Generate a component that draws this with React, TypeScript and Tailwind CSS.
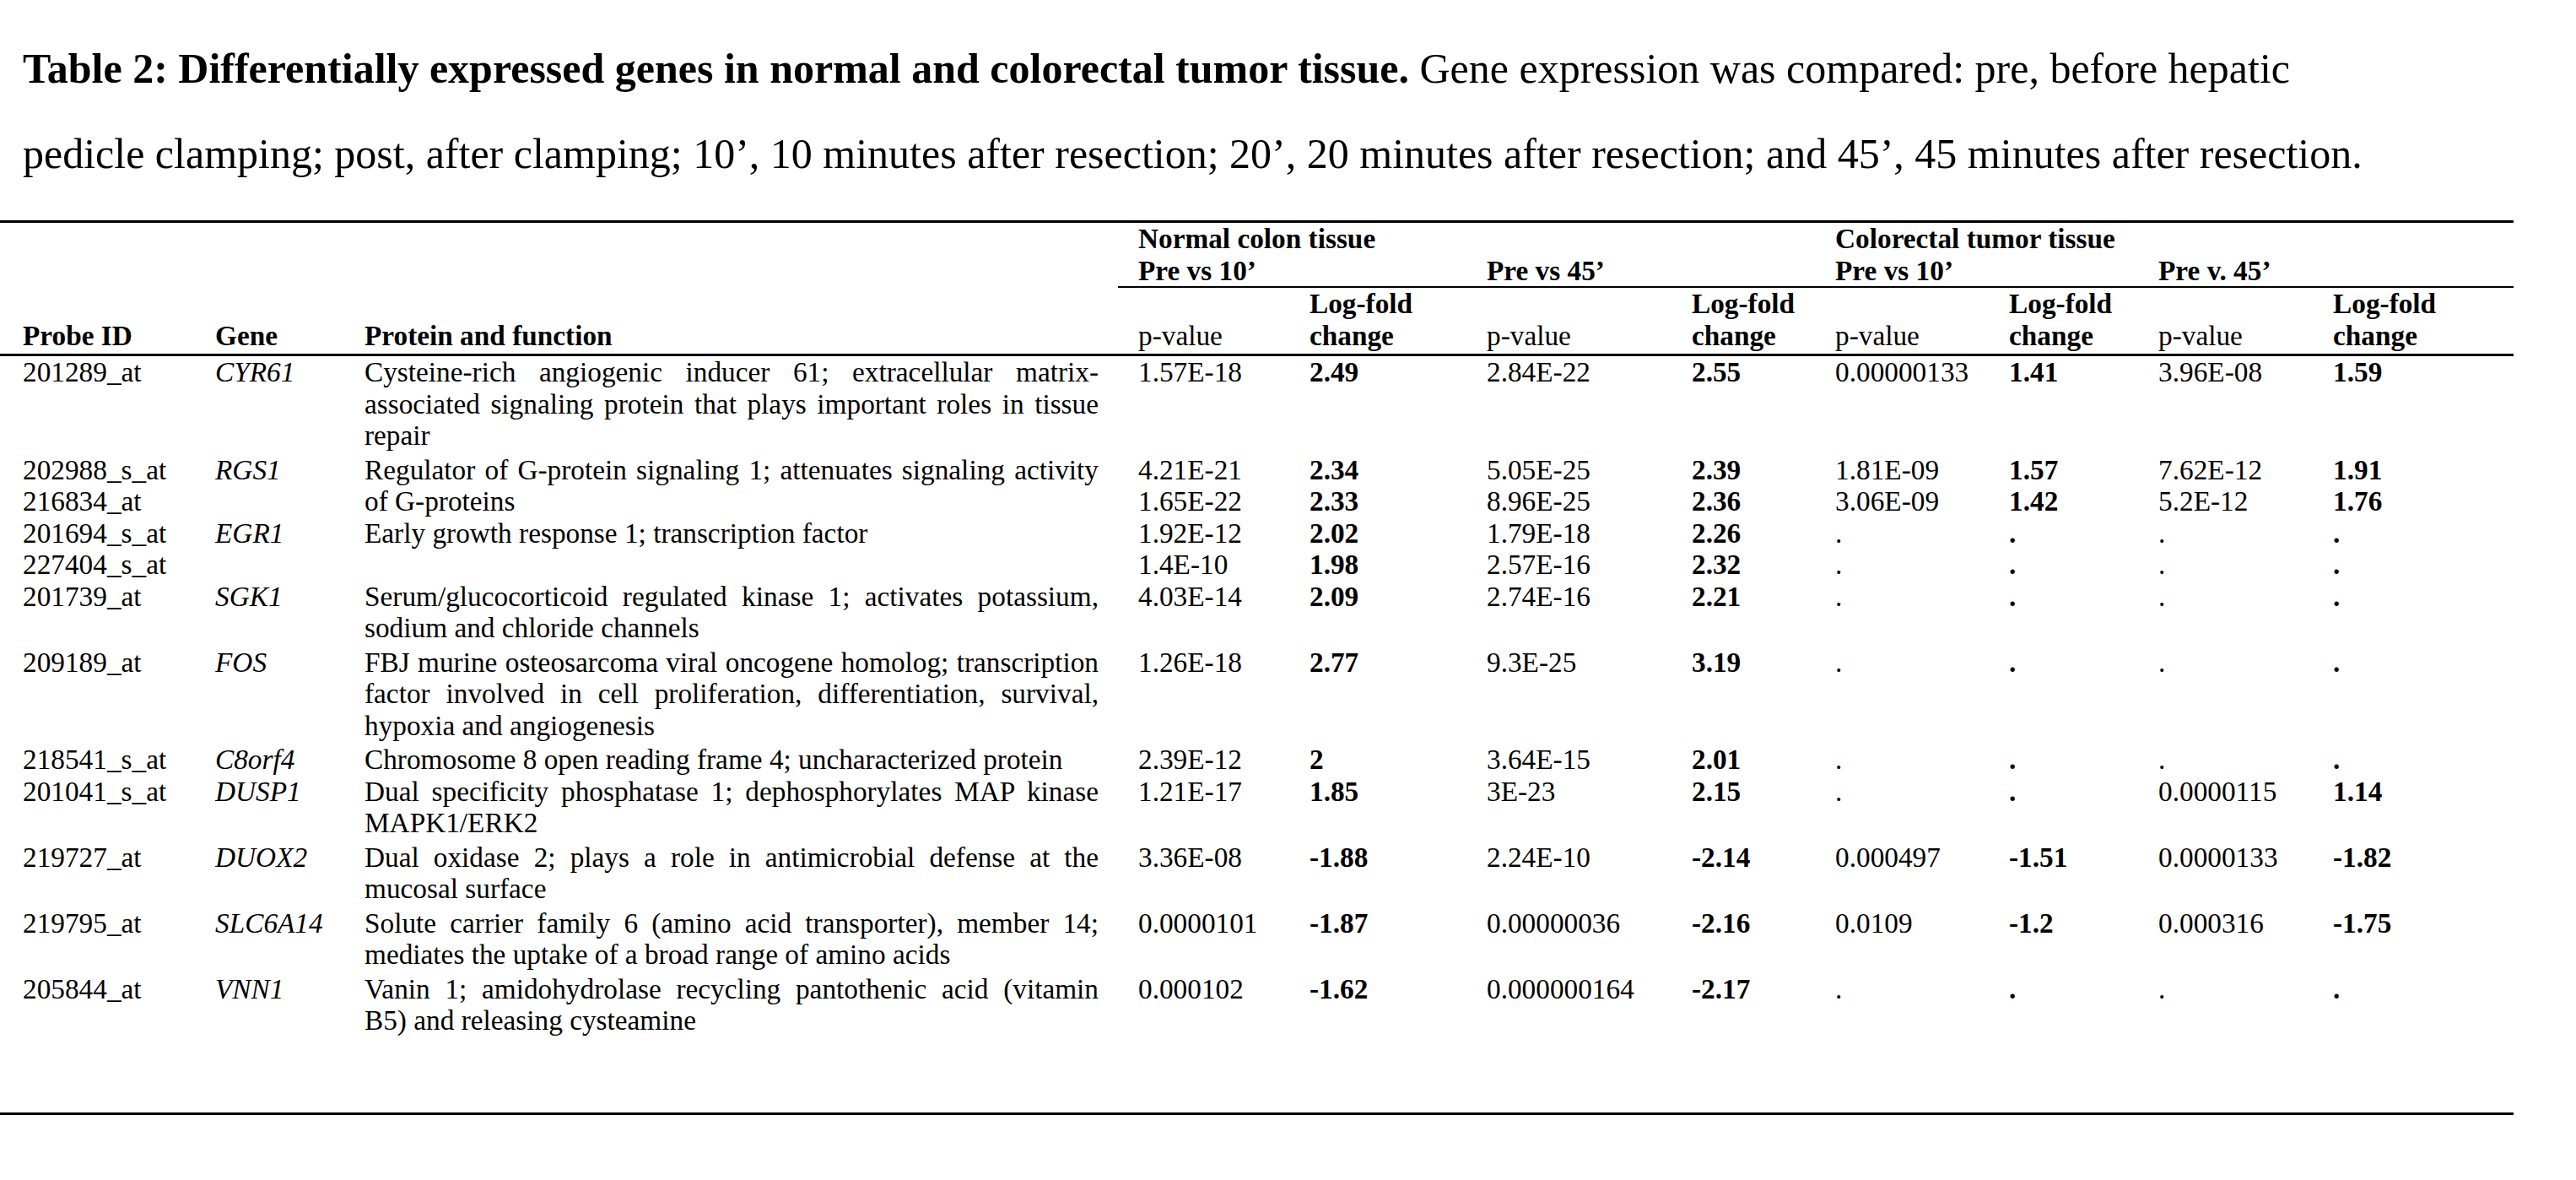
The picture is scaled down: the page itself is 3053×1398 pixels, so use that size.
import React from "react";

type Row = {
  probe: string;
  gene?: string;
  desc?: string;
  span?: number;
  skip?: boolean;
  multi?: boolean;
  vals: string[];
};

const rows: Row[] = [
  {
    probe: "201289_at",
    gene: "CYR61",
    desc: "Cysteine-rich angiogenic inducer 61; extracellular matrix-associated signaling protein that plays important roles in tissue repair",
    multi: true,
    vals: ["1.57E-18", "2.49", "2.84E-22", "2.55", "0.00000133", "1.41", "3.96E-08", "1.59"],
  },
  {
    probe: "202988_s_at",
    gene: "RGS1",
    desc: "Regulator of G-protein signaling 1; attenuates signaling activity of G-proteins",
    span: 2,
    vals: ["4.21E-21", "2.34", "5.05E-25", "2.39", "1.81E-09", "1.57", "7.62E-12", "1.91"],
  },
  {
    probe: "216834_at",
    skip: true,
    vals: ["1.65E-22", "2.33", "8.96E-25", "2.36", "3.06E-09", "1.42", "5.2E-12", "1.76"],
  },
  {
    probe: "201694_s_at",
    gene: "EGR1",
    desc: "Early growth response 1; transcription factor",
    span: 2,
    vals: ["1.92E-12", "2.02", "1.79E-18", "2.26", ".", ".", ".", "."],
  },
  {
    probe: "227404_s_at",
    skip: true,
    vals: ["1.4E-10", "1.98", "2.57E-16", "2.32", ".", ".", ".", "."],
  },
  {
    probe: "201739_at",
    gene: "SGK1",
    desc: "Serum/glucocorticoid regulated kinase 1; activates potassium, sodium and chloride channels",
    multi: true,
    vals: ["4.03E-14", "2.09", "2.74E-16", "2.21", ".", ".", ".", "."],
  },
  {
    probe: "209189_at",
    gene: "FOS",
    desc: "FBJ murine osteosarcoma viral oncogene homolog; transcription factor involved in cell proliferation, differentiation, survival, hypoxia and angiogenesis",
    multi: true,
    vals: ["1.26E-18", "2.77", "9.3E-25", "3.19", ".", ".", ".", "."],
  },
  {
    probe: "218541_s_at",
    gene: "C8orf4",
    desc: "Chromosome 8 open reading frame 4; uncharacterized protein",
    vals: ["2.39E-12", "2", "3.64E-15", "2.01", ".", ".", ".", "."],
  },
  {
    probe: "201041_s_at",
    gene: "DUSP1",
    desc: "Dual specificity phosphatase 1; dephosphorylates MAP kinase MAPK1/ERK2",
    multi: true,
    vals: ["1.21E-17", "1.85", "3E-23", "2.15", ".", ".", "0.0000115", "1.14"],
  },
  {
    probe: "219727_at",
    gene: "DUOX2",
    desc: "Dual oxidase 2; plays a role in antimicrobial defense at the mucosal surface",
    multi: true,
    vals: ["3.36E-08", "-1.88", "2.24E-10", "-2.14", "0.000497", "-1.51", "0.0000133", "-1.82"],
  },
  {
    probe: "219795_at",
    gene: "SLC6A14",
    desc: "Solute carrier family 6 (amino acid transporter), member 14; mediates the uptake of a broad range of amino acids",
    multi: true,
    vals: ["0.0000101", "-1.87", "0.00000036", "-2.16", "0.0109", "-1.2", "0.000316", "-1.75"],
  },
  {
    probe: "205844_at",
    gene: "VNN1",
    desc: "Vanin 1; amidohydrolase recycling pantothenic acid (vitamin B5) and releasing cysteamine",
    multi: true,
    vals: ["0.000102", "-1.62", "0.000000164", "-2.17", ".", ".", ".", "."],
  },
];

export default function App() {
  return (
    <div className="min-h-screen w-[3053px] bg-white text-black font-['Liberation_Serif','Times_New_Roman',serif]">
      <div className="pl-[27px] pt-[31px] mb-[28px] text-[50px] leading-[101px] whitespace-nowrap">
        <span className="font-bold">
          Table 2: Differentially expressed genes in normal and colorectal tumor tissue.
        </span>{" "}
        Gene expression was compared: pre, before hepatic
        <br />
        pedicle clamping; post, after clamping; 10’, 10 minutes after resection; 20’, 20 minutes after resection; and 45’, 45 minutes after resection.
      </div>

      <table className="w-[2979px] table-fixed border-separate border-spacing-0 text-[33.3px] leading-[37.5px]">
        <colgroup>
          <col className="w-[231px]" />
          <col className="w-[177px]" />
          <col className="w-[917px]" />
          <col className="w-[203px]" />
          <col className="w-[210px]" />
          <col className="w-[243px]" />
          <col className="w-[170px]" />
          <col className="w-[206px]" />
          <col className="w-[177px]" />
          <col className="w-[207px]" />
          <col className="w-[238px]" />
        </colgroup>
        <thead className="font-bold">
          <tr>
            <th rowSpan={3} className="pl-[27px] pb-[3px] text-left align-bottom font-bold border-t-[3px] border-b-[3px] border-black">
              Probe ID
            </th>
            <th rowSpan={3} className="pl-[24px] pb-[3px] text-left align-bottom font-bold border-t-[3px] border-b-[3px] border-black">
              Gene
            </th>
            <th rowSpan={3} className="pl-[24px] pb-[3px] text-left align-bottom font-bold border-t-[3px] border-b-[3px] border-black">
              Protein and function
            </th>
            <th colSpan={4} className="pl-[24px] text-left align-top font-bold border-t-[3px] border-black">
              Normal colon tissue
            </th>
            <th colSpan={4} className="pl-[24px] text-left align-top font-bold border-t-[3px] border-black">
              Colorectal tumor tissue
            </th>
          </tr>
          <tr>
            <th colSpan={2} className="pl-[24px] text-left font-bold border-b-2 border-black">Pre vs 10’</th>
            <th colSpan={2} className="pl-[24px] text-left font-bold border-b-2 border-black">Pre vs 45’</th>
            <th colSpan={2} className="pl-[24px] text-left font-bold border-b-2 border-black">Pre vs 10’</th>
            <th colSpan={2} className="pl-[24px] text-left font-bold border-b-2 border-black">Pre v. 45’</th>
          </tr>
          <tr>
            {[0, 1, 2, 3].map((i) => (
              <React.Fragment key={i}>
                <th className="pl-[24px] pb-[3px] text-left align-bottom font-normal border-b-[3px] border-black">
                  p-value
                </th>
                <th className="pl-[24px] pb-[3px] text-left align-bottom font-bold border-b-[3px] border-black">
                  Log-fold
                  <br />
                  change
                </th>
              </React.Fragment>
            ))}
          </tr>
        </thead>
        <tbody>
          {rows.map((r) => (
            <tr key={r.probe}>
              <td className={`pl-[27px] align-top ${r.multi ? "pb-[3px]" : "pb-0"}`}>{r.probe}</td>
              {!r.skip && (
                <td rowSpan={r.span ?? 1} className={`pl-[24px] align-top italic ${r.multi ? "pb-[3px]" : "pb-0"}`}>
                  {r.gene}
                </td>
              )}
              {!r.skip && (
                <td rowSpan={r.span ?? 1} className={`pl-[24px] pr-[23px] align-top text-justify ${r.multi ? "pb-[3px]" : "pb-0"}`}>
                  {r.desc}
                </td>
              )}
              {r.vals.map((v, i) => (
                <td
                  key={i}
                  className={`pl-[24px] align-top ${i % 2 === 1 ? "font-bold" : "font-normal"} ${r.multi ? "pb-[3px]" : "pb-0"}`}
                >
                  {v}
                </td>
              ))}
            </tr>
          ))}
          <tr>
            <td colSpan={11} className="h-[90px] border-b-[3px] border-black"></td>
          </tr>
        </tbody>
      </table>
    </div>
  );
}
